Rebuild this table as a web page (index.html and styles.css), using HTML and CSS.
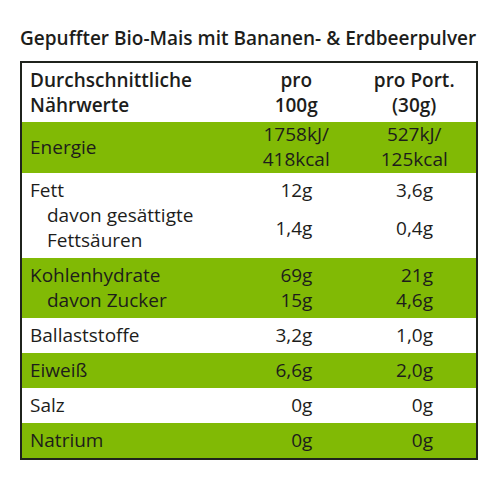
FILE: index.html
```html
<!DOCTYPE html>
<html lang="de">
<head>
    <meta charset="UTF-8">
    <meta name="viewport" content="width=device-width, initial-scale=1.0">
    <title>Nährwerte – Gepuffter Bio-Mais</title>
    <link rel="stylesheet" href="styles.css">
</head>
<body>
    <main class="label">
        <h1 class="product-title">Gepuffter Bio-Mais mit Bananen- &amp; Erdbeerpulver</h1>

        <table class="nutrition">
            <colgroup>
                <col class="col-name">
                <col class="col-100">
                <col class="col-port">
            </colgroup>
            <thead>
                <tr>
                    <th class="name">Durchschnittliche<br>Nährwerte</th>
                    <th class="center">pro<br>100g</th>
                    <th class="center">pro Port.<br>(30g)</th>
                </tr>
            </thead>
            <tbody class="band green tight">
                <tr>
                    <td class="name">Energie</td>
                    <td class="center">1758kJ/<br>418kcal</td>
                    <td class="center">527kJ/<br>125kcal</td>
                </tr>
            </tbody>
            <tbody class="band">
                <tr>
                    <td class="name">Fett</td>
                    <td class="val">12g</td>
                    <td class="val">3,6g</td>
                </tr>
                <tr>
                    <td class="name sub">davon gesättigte<br>Fettsäuren</td>
                    <td class="val">1,4g</td>
                    <td class="val">0,4g</td>
                </tr>
            </tbody>
            <tbody class="band green">
                <tr>
                    <td class="name">Kohlenhydrate</td>
                    <td class="val">69g</td>
                    <td class="val">21g</td>
                </tr>
                <tr>
                    <td class="name sub">davon Zucker</td>
                    <td class="val">15g</td>
                    <td class="val">4,6g</td>
                </tr>
            </tbody>
            <tbody class="band">
                <tr>
                    <td class="name">Ballaststoffe</td>
                    <td class="val">3,2g</td>
                    <td class="val">1,0g</td>
                </tr>
            </tbody>
            <tbody class="band green">
                <tr>
                    <td class="name">Eiweiß</td>
                    <td class="val">6,6g</td>
                    <td class="val">2,0g</td>
                </tr>
            </tbody>
            <tbody class="band">
                <tr>
                    <td class="name">Salz</td>
                    <td class="val">0g</td>
                    <td class="val">0g</td>
                </tr>
            </tbody>
            <tbody class="band green">
                <tr>
                    <td class="name">Natrium</td>
                    <td class="val">0g</td>
                    <td class="val">0g</td>
                </tr>
            </tbody>
        </table>
    </main>
</body>
</html>
```

FILE: styles.css
```css
:root {
    --color-green: #81ba05;
    --color-ink: #1d1d1b;
    --color-border: #1f231c;
}

body {
    margin: 0;
    padding: 0;
    background: #fff;
    color: var(--color-ink);
    font-family: 'Open Sans', Lato, sans-serif;
    font-size: 19px;
    line-height: 25px;
}

.label {
    padding: 26px 22px 0 20px;
}

.product-title {
    margin: 0 0 10px;
    font-size: 19px;
    line-height: 25px;
    font-weight: 600;
}

.nutrition {
    width: 458px;
    border: 2px solid var(--color-border);
    border-collapse: collapse;
    table-layout: fixed;
}

.col-name { width: 218px; }
.col-100 { width: 112px; }
.col-port { width: 124px; }

.nutrition th,
.nutrition td {
    padding: 0;
    vertical-align: middle;
}

.nutrition th {
    font-weight: 600;
    padding-top: 5px;
    padding-bottom: 4px;
}

.name {
    text-align: left;
    padding-left: 8px !important;
}

.name.sub {
    padding-left: 25px !important;
}

.center {
    text-align: center;
}

.val {
    text-align: right;
}

.val:nth-child(2) { padding-right: 40px !important; }
.val:nth-child(3) { padding-right: 43px !important; }

.band.green {
    background-color: var(--color-green);
}

/* first and last rows of each band get the breathing room */
.band tr:first-child td {
    padding-top: 5px;
}

.band tr:last-child td {
    padding-bottom: 5px;
}

.band.tight tr td {
    padding-top: 0;
    padding-bottom: 1px;
}
```
